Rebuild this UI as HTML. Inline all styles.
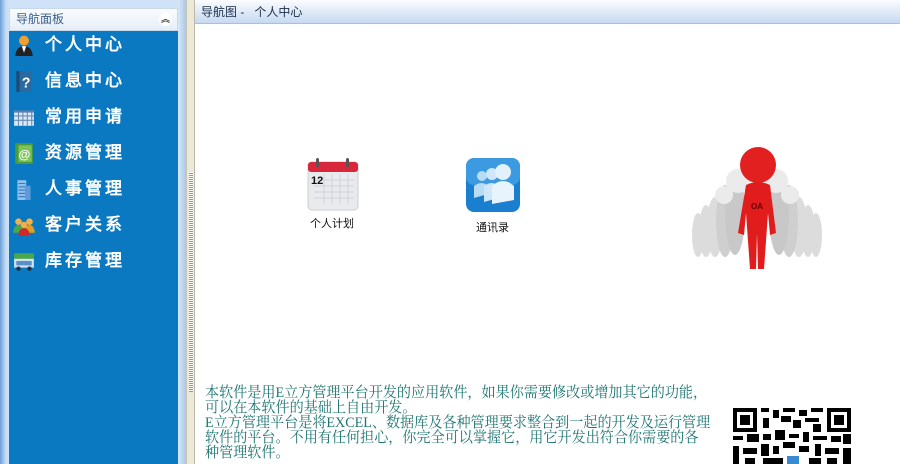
<!DOCTYPE html>
<html><head><meta charset="utf-8"><style>
*{margin:0;padding:0;box-sizing:border-box}
body{width:900px;height:464px;overflow:hidden;background:#fff;position:relative;font-family:"Liberation Sans","Noto Sans CJK SC",sans-serif}
.side{position:absolute;left:0;top:0;width:186px;height:464px;background:linear-gradient(90deg,#6a9fd8 0,#b9d6f2 5px,#cfe2f7 8px)}
.panelh{position:absolute;left:9px;top:8px;width:169px;height:23px;background:linear-gradient(#fafcfe,#e6eef6);border:1px solid #c9d9ea;font-size:12px;color:#3a5f8c;line-height:21px;padding-left:6px}
.panelh .up{position:absolute;right:5px;top:4px;width:13px;height:13px;border-radius:7px;background:#fff;font-size:9px;line-height:12px;text-align:center;color:#333;font-weight:bold}
.blue{position:absolute;left:9px;top:31px;width:169px;height:433px;background:#0a79c2}
.rb{position:absolute;left:178px;top:0;width:8px;height:464px;background:linear-gradient(90deg,#d9e8f7,#a9c8ea)}
.item{position:absolute;left:8px;height:26px;width:160px;color:#fff;font-size:17px;font-weight:bold;letter-spacing:3px;line-height:26px;padding-left:37px;font-family:"Liberation Sans","WenQuanYi Zen Hei",sans-serif}
.ic{position:absolute;left:5px;top:2px;width:22px;height:22px}
.split{position:absolute;left:186px;top:0;width:9px;height:464px;background:#ece9d8;border-left:1px solid #c8c4b0;border-right:1px solid #bdb9a6}
.dots{position:absolute;left:2px;top:172px;width:4px;height:220px;background:repeating-linear-gradient(#fff 0 1px,#9a9886 1px 2px)}
.title{position:absolute;left:195px;top:0;width:705px;height:24px;background:linear-gradient(#fbfcfe,#c6d9f1);border-bottom:1px solid #a8c0de;font-size:12px;line-height:24px;padding-left:6px;color:#1b2f4a}
.lbl{position:absolute;font-size:11px;color:#111}
.txt{position:absolute;left:205px;top:386px;color:#1d7572;font-size:15px;line-height:15px;font-family:"Liberation Serif","Noto Serif CJK SC",serif;transform-origin:0 0;transform:scaleX(.94);white-space:nowrap}
</style></head><body>
<div class="side"></div>
<div class="panelh">导航面板<div class="up">︽</div></div>
<div class="blue"></div>
<div class="rb"></div>
<div class="item" style="top:32px"><svg class="ic" viewBox="0 0 20 20"><circle cx="10" cy="6" r="4.5" fill="#f0a030"/><path d="M2 20 Q3 11 10 11 Q17 11 18 20Z" fill="#222"/><path d="M8 11 L10 17 L12 11Z" fill="#fff"/></svg>个人中心</div>
<div class="item" style="top:68px"><svg class="ic" viewBox="0 0 20 20"><rect x="3" y="1" width="14" height="19" fill="#2a6aa0"/><rect x="3" y="1" width="3" height="19" fill="#1a4c78"/><text x="8" y="16" font-size="13" fill="#fff" font-weight="bold">?</text></svg>信息中心</div>
<div class="item" style="top:104px"><svg class="ic" viewBox="0 0 20 20"><rect x="1" y="5" width="18" height="13" fill="#dde8f5"/><path d="M1 9H19M1 13H19M5 5V18M9 5V18M13 5V18M17 5V18" stroke="#6a8cb5"/><rect x="1" y="4" width="18" height="2" fill="#5b7fb0"/></svg>常用申请</div>
<div class="item" style="top:140px"><svg class="ic" viewBox="0 0 20 20"><rect x="2" y="1" width="16" height="19" fill="#4a9c3a"/><rect x="5" y="3" width="12" height="15" fill="#7cc35a"/><text x="5" y="15" font-size="11" fill="#fff">@</text></svg>资源管理</div>
<div class="item" style="top:176px"><svg class="ic" viewBox="0 0 20 20"><rect x="4" y="2" width="8" height="18" fill="#8fc2ee"/><rect x="11" y="7" width="5" height="13" fill="#5b9bd8"/><path d="M5 5H11M5 8H11M5 11H11M5 14H11M5 17H11" stroke="#3b78b8"/></svg>人事管理</div>
<div class="item" style="top:212px"><svg class="ic" viewBox="0 0 20 20"><circle cx="5" cy="7" r="3" fill="#f2b04a"/><circle cx="15" cy="7" r="3" fill="#f2b04a"/><circle cx="10" cy="10" r="3" fill="#f2b04a"/><path d="M0 17Q1 10 5 10Q9 10 9 17Z" fill="#4aa84a"/><path d="M11 17Q11 10 15 10Q19 10 20 17Z" fill="#e0a020"/><path d="M5 20Q5 13 10 13Q15 13 15 20Z" fill="#d02828"/></svg>客户关系</div>
<div class="item" style="top:248px"><svg class="ic" viewBox="0 0 20 20"><rect x="1" y="3" width="18" height="6" fill="#4aa84a"/><rect x="1" y="8" width="18" height="8" fill="#cfe3f5"/><rect x="3" y="10" width="14" height="4" fill="#5b8fc8"/><circle cx="5" cy="17" r="2" fill="#234"/><circle cx="15" cy="17" r="2" fill="#234"/></svg>库存管理</div>
<div class="split"><div class="dots"></div></div>
<div class="title">导航图 -&nbsp;&nbsp;&nbsp;个人中心</div>

<svg style="position:absolute;left:306px;top:158px" width="54" height="54" viewBox="0 0 54 54">
<rect x="2" y="4" width="50" height="48" rx="4" fill="#e8eaee" stroke="#c9ccd2"/>
<rect x="2" y="4" width="50" height="10" rx="3" fill="#d8273a"/>
<rect x="10" y="0" width="3" height="9" rx="1.5" fill="#555"/><rect x="40" y="0" width="3" height="9" rx="1.5" fill="#555"/>
<g stroke="#cfd3da" stroke-width="1"><path d="M8 22H48M8 28H48M8 34H48M8 40H48M18 16V46M26 16V46M34 16V46M42 16V46"/></g>
<text x="5" y="26" font-size="11" font-weight="bold" fill="#111" font-family="Liberation Sans">12</text>
</svg>
<div class="lbl" style="left:310px;top:215px">个人计划</div>

<svg style="position:absolute;left:466px;top:158px" width="54" height="54" viewBox="0 0 54 54">
<rect x="0" y="0" width="54" height="54" rx="8" fill="#1a7fcf"/>
<rect x="0" y="0" width="54" height="27" rx="8" fill="#3b9ae0"/>
<circle cx="16" cy="18" r="5" fill="#b9dcf5"/><circle cx="26" cy="16" r="6" fill="#cfe7f8"/><circle cx="37" cy="14" r="8" fill="#e2f1fb"/>
<path d="M8 40 V28 Q16 22 22 28 V36Z" fill="#b9dcf5"/><path d="M18 44 V28 Q26 22 32 28 V40Z" fill="#cfe7f8"/><path d="M26 46 V28 Q37 18 48 28 V42Z" fill="#e8f4fc"/>
</svg>
<div class="lbl" style="left:476px;top:219px">通讯录</div>

<svg style="position:absolute;left:688px;top:143px" width="140" height="130" viewBox="0 0 140 130">
<g fill="#dcdcdc">
<ellipse cx="10" cy="92" rx="6" ry="22"/><ellipse cx="128" cy="92" rx="6" ry="22"/>
<ellipse cx="18" cy="88" rx="7" ry="26"/><ellipse cx="120" cy="88" rx="7" ry="26"/>
<ellipse cx="27" cy="84" rx="8" ry="30"/><ellipse cx="111" cy="84" rx="8" ry="30"/>
</g>
<g fill="#cfcfcf">
<ellipse cx="37" cy="78" rx="9" ry="36"/><ellipse cx="101" cy="78" rx="9" ry="36"/>
<ellipse cx="47" cy="70" rx="10" ry="42" fill="#c8c8c8"/><ellipse cx="91" cy="70" rx="10" ry="42" fill="#c8c8c8"/>
</g>
<g fill="#ebebeb"><circle cx="50" cy="38" r="12"/><circle cx="88" cy="38" r="12"/><circle cx="36" cy="52" r="9"/><circle cx="102" cy="52" r="9"/></g>
<circle cx="70" cy="22" r="18" fill="#e22020"/>
<path d="M58 42 Q70 36 82 42 L88 90 L82 92 L80 70 L76 126 L70 126 L69 90 L68 126 L62 126 L58 70 L56 92 L50 90Z" fill="#e01c1c"/>
<text x="63" y="66" font-size="8" font-weight="bold" fill="#600" font-family="Liberation Sans">OA</text>
</svg>

<div class="txt">本软件是用E立方管理平台开发的应用软件，如果你需要修改或增加其它的功能，<br>可以在本软件的基础上自由开发。<br>E立方管理平台是将EXCEL、数据库及各种管理要求整合到一起的开发及运行管理<br>软件的平台。不用有任何担心，你完全可以掌握它，用它开发出符合你需要的各<br>种管理软件。</div>

<svg style="position:absolute;left:733px;top:408px" width="118" height="56" viewBox="0 0 118 56" shape-rendering="crispEdges">
<rect x="0" y="0" width="24" height="24" fill="#000"/><rect x="4" y="4" width="16" height="16" fill="#fff"/><rect x="7" y="7" width="10" height="10" fill="#000"/>
<rect x="94" y="0" width="24" height="24" fill="#000"/><rect x="98" y="4" width="16" height="16" fill="#fff"/><rect x="101" y="7" width="10" height="10" fill="#000"/>
<g fill="#000">
<rect x="28" y="0" width="8" height="4"/><rect x="40" y="2" width="6" height="8"/><rect x="50" y="0" width="12" height="4"/><rect x="66" y="2" width="8" height="6"/><rect x="78" y="0" width="12" height="4"/>
<rect x="30" y="10" width="6" height="10"/><rect x="48" y="8" width="10" height="6"/><rect x="60" y="12" width="8" height="8"/><rect x="72" y="10" width="14" height="4"/><rect x="80" y="16" width="8" height="8"/>
<rect x="0" y="28" width="10" height="4"/><rect x="14" y="26" width="12" height="8"/><rect x="30" y="26" width="8" height="6"/><rect x="42" y="22" width="10" height="10"/><rect x="56" y="26" width="10" height="4"/><rect x="70" y="24" width="6" height="10"/><rect x="80" y="28" width="14" height="4"/><rect x="98" y="28" width="10" height="6"/><rect x="110" y="26" width="8" height="10"/>
<rect x="0" y="38" width="6" height="18"/><rect x="10" y="40" width="14" height="6"/><rect x="28" y="36" width="8" height="12"/><rect x="40" y="38" width="6" height="8"/><rect x="50" y="34" width="12" height="6"/><rect x="66" y="38" width="10" height="6"/><rect x="82" y="36" width="6" height="12"/><rect x="92" y="40" width="14" height="6"/><rect x="110" y="40" width="8" height="16"/>
<rect x="12" y="50" width="10" height="6"/><rect x="30" y="50" width="20" height="6"/><rect x="76" y="50" width="12" height="6"/><rect x="94" y="50" width="10" height="6"/>
</g>
<rect x="54" y="48" width="12" height="8" fill="#3a8ad0"/>
</svg>
</body></html>
